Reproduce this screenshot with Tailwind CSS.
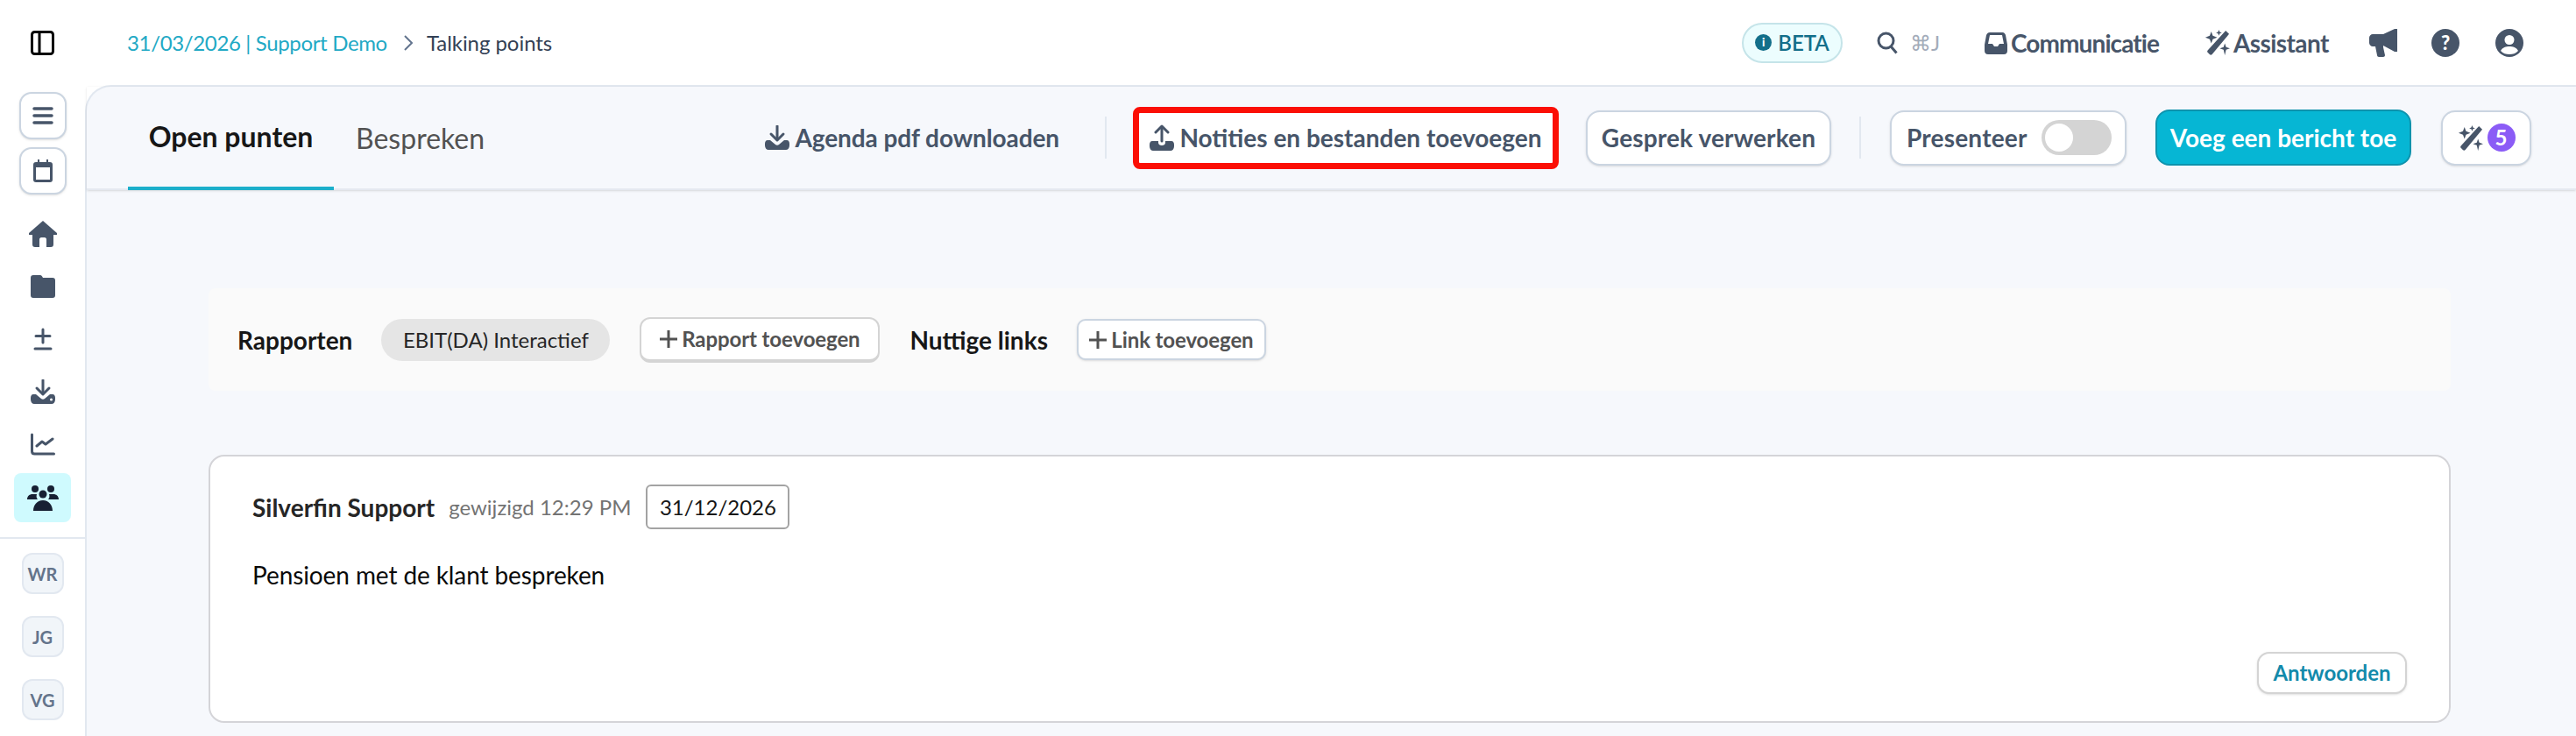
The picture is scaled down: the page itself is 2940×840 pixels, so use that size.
<!DOCTYPE html>
<html lang="en">
<head>
  <meta charset="UTF-8">
  <title>Talking points</title>
  <script src="https://cdn.jsdelivr.net/npm/@tailwindcss/browser@4"></script>
</head>
<body class="h-[840px] overflow-hidden bg-white font-['Lato',sans-serif] text-[#475569]">
  <svg class="hidden">
    <symbol id="wand" viewBox="0 0 30 30"><path d="M25 1l4 4L9 29c-1 1-2 1-3 0l-2-2c-1-1-1-2 0-3z" fill="currentColor"/><path d="M8 2l1.800 5L15 9l-5.200 2L8 16l-1.800-5L1 9l5.200-2zM24 16l1.500 4.500 4.500 1.500-4.500 1.500L24 30l-1.500-6.500L18 22l4.500-1.500zM17 0l1 2.500 2.500 1L18 4.500 17 7l-1-2.500-2.500-1 2.500-1z" fill="currentColor"/></symbol>
  </svg>

  <header class="flex h-[97px] items-center pl-[35px] pr-[60px]">
    <svg class="h-[28px] w-[27px] text-black" viewBox="0 0 27 28" fill="none" stroke="currentColor" stroke-width="3"><rect x="1.500" y="1.500" width="24" height="25" rx="3"/><path d="M10 1.500v25"/></svg>
    <a class="ml-[83px] text-[24px] tracking-[-0.35px] text-[#22a9c5]">31/03/2026 | Support Demo</a>
    <svg class="ml-[18px] h-[20px] w-[12px] text-slate-500" viewBox="0 0 12 20" fill="none" stroke="currentColor" stroke-width="2"><path d="M2 2l8 8-8 8"/></svg>
    <span class="ml-[15px] text-[24px] tracking-[-0.05px] text-[#334155]">Talking points</span>

    <div class="ml-auto flex items-center">
      <div class="flex h-[46px] w-[115px] items-center justify-center gap-[7px] rounded-full border-2 border-[#c5e4e9] bg-[#ecfdfe] text-[24px] font-semibold text-[#136f8a]">
        <span class="flex h-[19px] w-[19px] items-center justify-center rounded-full bg-[#136f8a] text-[13px] font-black text-white">i</span>BETA
      </div>
      <svg class="ml-[39px] h-[26px] w-[24px]" viewBox="0 0 24 26" fill="none" stroke="currentColor" stroke-width="3"><circle cx="10.500" cy="10.500" r="8.500"/><path d="M16.500 17.500l6 7"/></svg>
      <span class="ml-[14px] w-[32px] text-[24px] text-[#a3acba]">⌘J</span>
      <svg class="ml-[53px] h-[26px] w-[26px]" viewBox="0 0 26 26"><path d="M6 1h14c2 0 3 1 4 3l2 11v7c0 2-1 4-4 4H4c-3 0-4-2-4-4v-7L2 4c1-2 2-3 4-3zm0 3L4 14h5l2 3h4l2-3h5L20 4z" fill="currentColor"/></svg>
      <span class="ml-[4px] w-[169px] whitespace-nowrap text-[28px] font-bold tracking-[-0.9px]">Communicatie</span>
      <svg class="ml-[52px] h-[29px] w-[29px]"><use href="#wand"/></svg>
      <span class="ml-[4px] w-[109px] whitespace-nowrap text-[28px] font-bold tracking-[-0.6px]">Assistant</span>
      <svg class="ml-[46px] h-[32px] w-[32px]" viewBox="0 0 32 32"><path d="M29 0h3v26h-3l-13-7v2l2 9c0 1-1 2-2 2h-5c-1 0-2-1-2-2l-2-10H4c-2 0-4-2-4-4V10c0-2 2-4 4-4h12z" fill="currentColor"/></svg>
      <span class="ml-[39px] flex h-[32px] w-[32px] items-center justify-center rounded-full bg-[#475569] text-[22px] font-black text-white">?</span>
      <svg class="ml-[41px] h-[32px] w-[32px]" viewBox="0 0 32 32"><circle cx="16" cy="16" r="16" fill="currentColor"/><circle cx="16" cy="12.500" r="5.500" fill="#fff"/><path d="M6 25c2-4 6-5 10-5s8 1 10 5c-3 3-6 4-10 4s-7-1-10-4z" fill="#fff"/></svg>
    </div>
  </header>

  <div class="flex h-[743px]">
    <nav class="flex w-[97px] shrink-0 flex-col">
      <div class="flex flex-col items-center gap-[9px] pt-[8px]">
        <button class="flex h-[54px] w-[54px] items-center justify-center rounded-[14px] border-2 border-[#cbd5e1] bg-white shadow-sm">
          <svg class="h-[24px] w-[24px]" viewBox="0 0 24 24" stroke="currentColor" stroke-width="3.500" stroke-linecap="round"><path d="M2 4h20M2 12h20M2 20h20"/></svg>
        </button>
        <button class="flex h-[54px] w-[54px] items-center justify-center rounded-[14px] border-2 border-[#cbd5e1] bg-white shadow-sm">
          <svg class="h-[26px] w-[22px]" viewBox="0 0 22 26"><path d="M5 0h2v3h8V0h2v3h2c2 0 3 1 3 3v17c0 2-1 3-3 3H3c-2 0-3-1-3-3V6c0-2 1-3 3-3h2zM3 9v14h16V9z" fill="currentColor"/></svg>
        </button>
      </div>
      <div class="mt-[15px] flex flex-col items-center">
        <div class="flex h-[60px] items-center justify-center">
          <svg class="h-[30px] w-[32px]" viewBox="0 0 32 30"><path d="M16 0l16 14c1 1 0 2-1 2h-3v11c0 2-1 3-3 3h-5v-9c0-1-1-2-2-2h-4c-1 0-2 1-2 2v9H7c-2 0-3-1-3-3V16H1c-1 0-2-1-1-2z" fill="currentColor"/></svg>
        </div>
        <div class="flex h-[60px] items-center justify-center">
          <svg class="h-[26px] w-[28px]" viewBox="0 0 28 26"><path d="M3 0h8c1 0 2 1 3 3h11c2 0 3 1 3 3v17c0 2-1 3-3 3H3c-2 0-3-1-3-3V3c0-2 1-3 3-3z" fill="currentColor"/></svg>
        </div>
        <div class="flex h-[60px] items-center justify-center">
          <svg class="h-[26px] w-[22px]" viewBox="0 0 22 26" stroke="currentColor" stroke-width="3" stroke-linecap="round"><path d="M11 2v15M3 9.500h16M2 24h18"/></svg>
        </div>
        <div class="flex h-[60px] items-center justify-center">
          <svg class="h-[28px] w-[28px]" viewBox="0 0 28 28"><path d="M14 1v15" fill="none" stroke="currentColor" stroke-width="3" stroke-linecap="round"/><path d="M7 10l7 7 7-7" fill="none" stroke="currentColor" stroke-width="3" stroke-linecap="round" stroke-linejoin="round"/><path d="M3 17h3l6 5c1 1 3 1 4 0l6-5h3c2 0 3 2 3 4v2c0 3-2 5-4 5H4c-2 0-4-2-4-5v-2c0-2 1-4 3-4z" fill="currentColor"/><circle cx="23.500" cy="23" r="1.500" fill="#fff"/></svg>
        </div>
        <div class="flex h-[60px] items-center justify-center">
          <svg class="h-[26px] w-[28px]" viewBox="0 0 28 26" fill="none" stroke="currentColor" stroke-width="3" stroke-linecap="round" stroke-linejoin="round"><path d="M1.500 2v19c0 2 1 3 3 3h22"/><path d="M7 15l6-5 4 3 8-6"/></svg>
        </div>
      </div>
      <div class="mx-[16px] mt-[3px] flex h-[56px] items-center justify-center rounded-[8px] bg-[#cffafe] text-[#172033]">
        <svg class="h-[30px] w-[36px]" viewBox="0 0 36 30"><g fill="currentColor"><circle cx="9" cy="5" r="4"/><circle cx="27" cy="5" r="4"/><circle cx="18" cy="11" r="4.500"/><path d="M0 17c0-4 3-6 6-6h5c-1 3 0 5 1 6zM36 17c0-4-3-6-6-6h-5c1 3 0 5-1 6zM7 30c0-6 4-12 11-12s11 6 11 12z"/></g></svg>
      </div>
      <hr class="mt-[17px] border-t-2 border-[#e2e8f0]">
      <div class="flex flex-col items-center gap-[25px] pt-[16px] text-[20px] font-bold text-[#64748b]">
        <span class="flex h-[47px] w-[48px] items-center justify-center rounded-[12px] border-2 border-[#e2e8f0] bg-[#f1f5f9]">WR</span>
        <span class="flex h-[47px] w-[48px] items-center justify-center rounded-[12px] border-2 border-[#e2e8f0] bg-[#f1f5f9]">JG</span>
        <span class="flex h-[47px] w-[48px] items-center justify-center rounded-[12px] border-2 border-[#e2e8f0] bg-[#f1f5f9]">VG</span>
      </div>
    </nav>

    <main class="min-w-0 flex-1 rounded-tl-[30px] border-l-2 border-t-2 border-[#e2e8f0] bg-[#f6f8fc]">
      <div class="flex h-[118px] items-center border-b-2 border-[#e5e9f0] pl-[47px] pr-[51px] shadow-sm">
        <div class="flex h-full self-end">
          <div class="flex h-[118px] w-[235px] items-center justify-center border-b-4 border-[#1cafcb] text-[32px] font-bold text-[#171717]">Open punten</div>
          <div class="ml-[25px] flex h-[118px] items-center text-[32px] text-[#525252]">Bespreken</div>
        </div>
        <div class="ml-auto flex items-center">
          <span class="flex items-center gap-[6px] whitespace-nowrap text-[28px] font-bold tracking-[-0.1px]">
            <svg class="h-[28px] w-[28px]" viewBox="0 0 28 28"><path d="M14 1v15" fill="none" stroke="currentColor" stroke-width="3" stroke-linecap="round"/><path d="M7 10l7 7 7-7" fill="none" stroke="currentColor" stroke-width="3" stroke-linecap="round" stroke-linejoin="round"/><path d="M3 17h3l6 5c1 1 3 1 4 0l6-5h3c2 0 3 2 3 4v2c0 3-2 5-4 5H4c-2 0-4-2-4-5v-2c0-2 1-4 3-4z" fill="currentColor"/></svg>
            Agenda pdf downloaden
          </span>
          <span class="ml-[52px] h-[48px] w-[2px] bg-[#e2e8f0]"></span>
          <button class="ml-[30px] flex h-[71px] w-[486px] items-center justify-center gap-[6px] rounded-[8px] border-[7px] border-[#fb0f05] bg-white text-[28px] font-bold">
            <svg class="h-[30px] w-[28px]" viewBox="0 0 28 30"><path d="M14 19V3" fill="none" stroke="currentColor" stroke-width="3" stroke-linecap="round"/><path d="M7 9l7-7 7 7" fill="none" stroke="currentColor" stroke-width="3" stroke-linecap="round" stroke-linejoin="round"/><path d="M3 19h7v2c0 2 2 3 4 3s4-1 4-3v-2h7c2 0 3 2 3 4v2c0 3-2 5-4 5H4c-2 0-4-2-4-5v-2c0-2 1-4 3-4z" fill="currentColor"/></svg>
            Notities en bestanden toevoegen
          </button>
          <button class="ml-[31px] flex h-[63px] w-[280px] items-center justify-center rounded-[16px] border-2 border-[#cbd5e1] bg-white text-[28px] font-bold tracking-[0.15px] shadow-sm">Gesprek verwerken</button>
          <span class="ml-[32px] h-[48px] w-[2px] bg-[#e2e8f0]"></span>
          <div class="ml-[33px] flex h-[63px] w-[270px] items-center rounded-[16px] border-2 border-[#cbd5e1] bg-white pl-[17px] text-[28px] font-bold tracking-[0.2px] shadow-sm">
            Presenteer
            <span class="ml-auto mr-[15px] flex h-[40px] w-[80px] items-center rounded-full bg-[#d4d4d4] pl-[4px]"><span class="h-[32px] w-[32px] rounded-full bg-white"></span></span>
          </div>
          <button class="ml-[33px] flex h-[64px] w-[292px] items-center justify-center rounded-[16px] border-2 border-[#0e93ad] bg-[#06b6d4] text-[28px] font-bold text-white">Voeg een bericht toe</button>
          <button class="ml-[34px] flex h-[63px] w-[103px] items-center justify-center gap-[5px] rounded-[16px] border-2 border-[#cbd5e1] bg-white shadow-sm">
            <svg class="h-[29px] w-[29px]"><use href="#wand"/></svg>
            <span class="flex h-[32px] w-[32px] items-center justify-center rounded-full bg-[#8b5cf6] text-[24px] font-bold text-white">5</span>
          </button>
        </div>
      </div>

      <div class="pl-[139px] pr-[143px] pt-[112px]">
        <div class="flex h-[117px] items-center rounded-[8px] bg-[#fafafa] pl-[33px]">
          <span class="text-[28px] font-bold text-[#171717]">Rapporten</span>
          <span class="ml-[33px] flex h-[48px] w-[261px] items-center justify-center rounded-full bg-[#e5e5e5] text-[24px] text-[#262626]">EBIT(DA) Interactief</span>
          <button class="ml-[34px] flex h-[52px] w-[274px] items-center justify-center gap-[5px] rounded-[12px] border-2 border-[#d4d4d4] border-b-4 bg-white text-[24px] font-bold tracking-[-0.1px] text-[#525252]">
            <svg class="h-[20px] w-[20px]" viewBox="0 0 20 20" stroke="currentColor" stroke-width="3"><path d="M10 0v20M0 10h20"/></svg>Rapport toevoegen
          </button>
          <span class="ml-[34px] text-[28px] font-bold text-[#171717]">Nuttige links</span>
          <button class="ml-[33px] flex h-[47px] w-[216px] items-center justify-center gap-[5px] rounded-[10px] border-2 border-[#cbd5e1] bg-white text-[24px] font-bold tracking-[-0.1px] text-[#525252] shadow-sm">
            <svg class="h-[20px] w-[20px]" viewBox="0 0 20 20" stroke="currentColor" stroke-width="3"><path d="M10 0v20M0 10h20"/></svg>Link toevoegen
          </button>
        </div>

        <article class="mt-[73px] flex h-[306px] flex-col rounded-[18px] border-2 border-[#d4d4d8] bg-white pl-[48px] pr-[48px] pt-[32px]">
          <div class="flex items-center">
            <span class="text-[28px] font-bold text-[#262626]">Silverfin Support</span>
            <span class="ml-[16px] text-[24px] text-[#737373]">gewijzigd 12:29 PM</span>
            <span class="ml-[17px] flex h-[51px] w-[164px] items-center justify-center rounded-[6px] border-2 border-[#a3a3a3] text-[24px] text-[#171717]">31/12/2026</span>
          </div>
          <p class="mt-[34px] text-[28px] leading-[36px] tracking-[-0.1px] text-[#0a0a0a]">Pensioen met de klant bespreken</p>
          <div class="mt-auto mb-[31px] flex justify-end">
            <button class="flex h-[48px] w-[171px] items-center justify-center rounded-[14px] border-2 border-[#d4d4d4] bg-white text-[24px] font-bold text-[#138aab] shadow-sm">Antwoorden</button>
          </div>
        </article>
      </div>
    </main>
  </div>
</body>
</html>
